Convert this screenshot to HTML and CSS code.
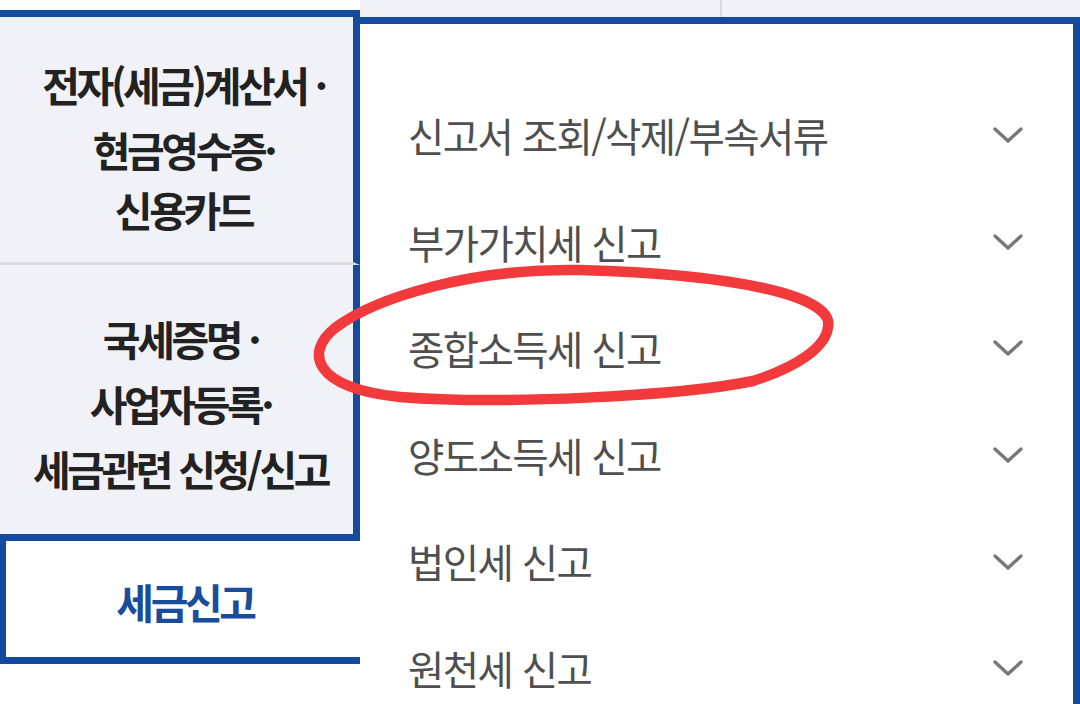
FILE: index.html
```html
<!DOCTYPE html>
<html lang="ko">
<head>
<meta charset="utf-8">
<title>세금신고</title>
<link rel="stylesheet" href="styles.css">
</head>
<body>
<div class="page">
  <div class="left">
    <div class="tabs">
      <div class="tab tab-first">
        <div class="line">전자(세금)계산서 ·</div>
        <div class="line line-short line-gap">현금영수증·</div>
        <div class="line line-short">신용카드</div>
      </div>
      <div class="tab tab-second">
        <div class="line">국세증명 ·</div>
        <div class="line">사업자등록·</div>
        <div class="line">세금관련 신청/신고</div>
      </div>
      <div class="tab tab-active">세금신고</div>
      <div class="tab tab-last"></div>
    </div>
  </div>
  <div class="right">
    <div class="topstrip">
      <div class="strip-cell"></div>
      <div class="strip-cell strip-divided"></div>
    </div>
    <div class="panel">
      <ul class="menu">
        <li class="item"><span>신고서 조회/삭제/부속서류</span><svg class="chev" viewBox="0 0 30 16"><path d="M2 2 L15 14 L28 2"/></svg></li>
        <li class="item"><span>부가가치세 신고</span><svg class="chev" viewBox="0 0 30 16"><path d="M2 2 L15 14 L28 2"/></svg></li>
        <li class="item"><span>종합소득세 신고</span><svg class="chev" viewBox="0 0 30 16"><path d="M2 2 L15 14 L28 2"/></svg></li>
        <li class="item"><span>양도소득세 신고</span><svg class="chev" viewBox="0 0 30 16"><path d="M2 2 L15 14 L28 2"/></svg></li>
        <li class="item"><span>법인세 신고</span><svg class="chev" viewBox="0 0 30 16"><path d="M2 2 L15 14 L28 2"/></svg></li>
        <li class="item"><span>원천세 신고</span><svg class="chev" viewBox="0 0 30 16"><path d="M2 2 L15 14 L28 2"/></svg></li>
      </ul>
    </div>
  </div>
</div>
<svg class="annot" viewBox="0 0 1080 704" width="1080" height="704">
  <path d="M828 327 C 835 295, 730 274, 580 270 C 470 268, 375 298, 335 328 C 305 352, 312 388, 400 397 C 500 405, 680 396, 753 381 C 800 366, 826 346, 828 327" />
</svg>
</body>
</html>
```

FILE: styles.css
```css
html, body {
  margin: 0;
  padding: 0;
  background: #ffffff;
}
body {
  width: 1080px;
  height: 704px;
  overflow: hidden;
  position: relative;
  font-family: "Noto Sans CJK KR", "Noto Sans", sans-serif;
}
.page {
  display: grid;
  grid-template-columns: 360px 720px;
  height: 704px;
}
.left {
  padding-top: 10px;
  background: #ffffff;
}
.tabs {
  border-top: 7px solid #1649a0;
  display: flex;
  flex-direction: column;
}
.tab {
  background: #f1f2f7;
  border-right: 7px solid #1649a0;
  color: #222222;
  font-weight: 700;
  font-size: 41px;
  letter-spacing: -3.4px;
  text-align: center;
  display: flex;
  flex-direction: column;
  justify-content: center;
  align-items: center;
}
.line {
  line-height: 65px;
  height: 65px;
  white-space: nowrap;
}
.line-short {
  line-height: 60px;
  height: 60px;
}
.line-gap {
  margin-top: 2px;
}
.tab-first {
  height: 248px;
  border-bottom: 3px solid #dcdde3;
  padding-left: 14px;
  box-sizing: border-box;
  padding-top: 12px;
}
.tab-second {
  height: 269px;
  padding-left: 8px;
  padding-top: 8px;
  box-sizing: border-box;
}
.tab-active {
  height: 130px;
  box-sizing: border-box;
  background: #ffffff;
  border-top: 7px solid #1649a0;
  border-bottom: 7px solid #1649a0;
  border-left: 6px solid #1649a0;
  border-right: 0;
  color: #1a4c9c;
  padding-top: 4px;
  padding-left: 4px;
}
.tab-last {
  flex: 1;
  height: 60px;
}
.right {
  display: flex;
  flex-direction: column;
}
.topstrip {
  height: 17px;
  display: flex;
  background: #f1f2f7;
}
.strip-cell {
  width: 360px;
}
.strip-divided {
  flex: 1;
  border-left: 2px solid #dadbe2;
}
.panel {
  flex: 1;
  border-top: 7px solid #1649a0;
  border-right: 7px solid #1649a0;
  background: #ffffff;
  padding: 58px 50px 0 48px;
}
.menu {
  list-style: none;
  margin: 0;
  padding: 0;
}
.item {
  height: 106.6px;
  line-height: 106.6px;
  display: flex;
  align-items: center;
  justify-content: space-between;
  color: #4f4f4f;
  font-size: 39.5px;
  letter-spacing: -1.6px;
  white-space: nowrap;
}
.chev {
  width: 30px;
  height: 16px;
  fill: none;
  stroke: #777777;
  stroke-width: 3.4;
  stroke-linecap: round;
  stroke-linejoin: round;
}
.annot {
  position: absolute;
  left: 0;
  top: 0;
  pointer-events: none;
}
.annot path {
  fill: none;
  stroke: #f23a3c;
  stroke-width: 10.5;
  stroke-linecap: round;
  stroke-linejoin: round;
}
```
